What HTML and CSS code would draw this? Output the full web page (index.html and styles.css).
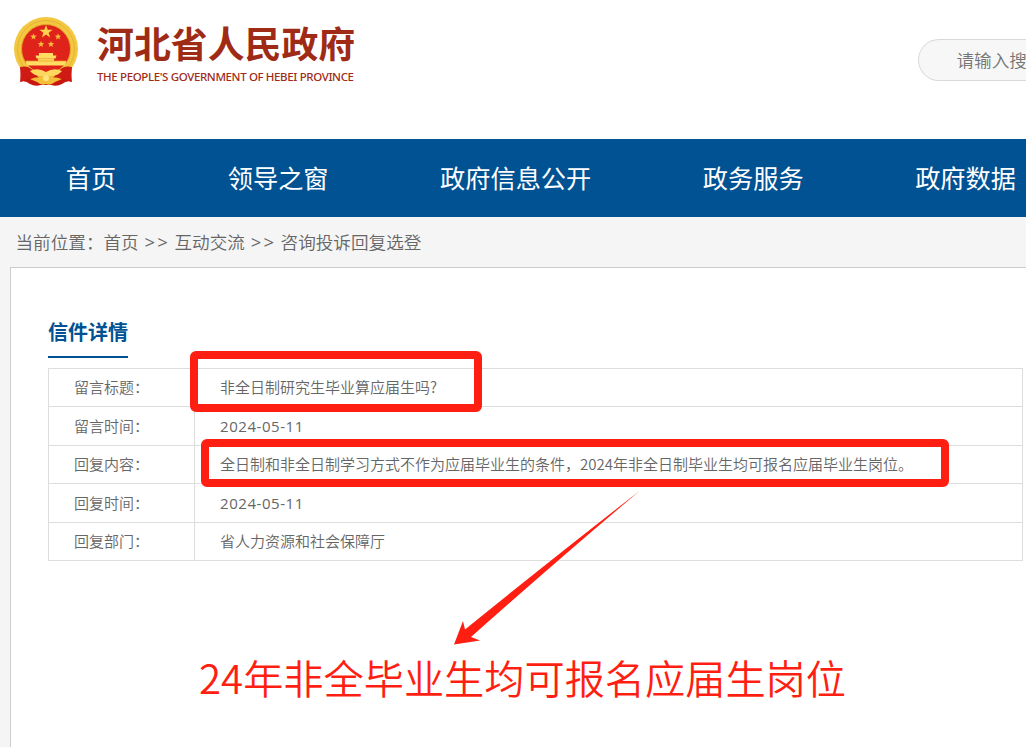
FILE: index.html
```html
<!DOCTYPE html>
<html lang="zh-CN">
<head>
    <meta charset="UTF-8">
    <meta name="viewport" content="width=device-width, initial-scale=1.0">
    <title>河北省人民政府</title>
    <link rel="stylesheet" href="styles.css">
</head>
<body>
    <header class="header">
        <div class="logo">
            <svg class="emblem" viewBox="0 0 66 70" width="66" height="70">
                <path d="M9 48 L7 65 Q12 63 17 67 Q22 70 28 68 L38 68 Q44 70 49 67 Q54 63 59 65 L57 48 Z" fill="#c9170f"/>
                <circle cx="33" cy="32" r="32" fill="#f3c740"/>
                <circle cx="33" cy="32" r="28.500" fill="none" stroke="#e6b432" stroke-width="1"/>
                <circle cx="33" cy="32" r="24.500" fill="#e0231a" stroke="#e0a428" stroke-width="1"/>
                <path d="M7 50 Q16 48 20 54 L26 61 Q16 60 8 65 Z M59 50 Q50 48 46 54 L40 61 Q50 60 58 65 Z" fill="#cf1b13"/>
                <path d="M33 8l1.700 4.700h4.900l-4 3 1.500 4.800-4.100-2.900-4.100 2.900 1.500-4.800-4-3h4.900z" fill="#ffd34a"/>
                <g fill="#f6b93a">
                    <path d="M20.500 16.500l.9 2.100 2.300.2-1.800 1.400.6 2.300-2-1.300-2 1.300.6-2.300-1.800-1.400 2.300-.2z"/>
                    <path d="M45 16.500l.9 2.100 2.300.2-1.800 1.400.6 2.300-2-1.300-2 1.300.6-2.300-1.800-1.400 2.300-.2z"/>
                    <path d="M28 24l.9 2.100 2.300.2-1.800 1.400.6 2.300-2-1.300-2 1.300.6-2.300-1.800-1.400 2.300-.2z"/>
                    <path d="M38 24l.9 2.100 2.300.2-1.800 1.400.6 2.300-2-1.300-2 1.300.6-2.300-1.800-1.400 2.300-.2z"/>
                </g>
                <path d="M26 36h14v2.500h3.500l-1 3H23.500l-1-3H26zM25 41h16v3H25zM12.500 44h41l-1.500 4.500H14z" fill="#ffdc62"/>
                <path d="M24 41.700h18M13 44h40" stroke="#ef9a2c" stroke-width=".7"/>
                <path d="M17 54Q25 50 33 55Q41 50 49 54Q43 61 33 58Q23 61 17 54Z" fill="#ffd75c"/>
                <path d="M17 62Q26 59 33 61Q40 59 49 62L42 65Q37 69 33 67Q29 69 24 65Z" fill="#f3bf38"/>
                <circle cx="33" cy="61" r="3" fill="#ffe480"/>
            </svg>
            <div class="logo-text">
                <div class="logo-cn">河北省人民政府</div>
                <div class="logo-en">THE PEOPLE'S GOVERNMENT OF HEBEI PROVINCE</div>
            </div>
        </div>
        <div class="search">请输入搜</div>
    </header>

    <nav class="nav">
        <a>首页</a>
        <a>领导之窗</a>
        <a>政府信息公开</a>
        <a>政务服务</a>
        <a>政府数据</a>
    </nav>

    <div class="breadcrumb">当前位置：<a>首页</a><i>&gt;&gt;</i><a>互动交流</a><i>&gt;&gt;</i><a>咨询投诉回复选登</a></div>

    <main class="panel">
        <h2 class="title">信件详情</h2>
        <table class="detail">
            <tr class="first">
                <th>留言标题：</th>
                <td>非全日制研究生毕业算应届生吗?</td>
            </tr>
            <tr>
                <th>留言时间：</th>
                <td class="date">2024-05-11</td>
            </tr>
            <tr>
                <th>回复内容：</th>
                <td>全日制和非全日制学习方式不作为应届毕业生的条件，2024年非全日制毕业生均可报名应届毕业生岗位。</td>
            </tr>
            <tr>
                <th>回复时间：</th>
                <td class="date">2024-05-11</td>
            </tr>
            <tr>
                <th>回复部门：</th>
                <td>省人力资源和社会保障厅</td>
            </tr>
        </table>
        <p class="note">24年非全毕业生均可报名应届生岗位</p>
    </main>

    <!-- highlight boxes and arrow over the table -->
    <div class="mark mark-title"></div>
    <div class="mark mark-reply"></div>
    <svg class="arrow" viewBox="0 0 190 160" width="190" height="160">
        <path d="M189.500 0 Q112 60 15 138.500 L13 130 L4 153.500 L30 149.500 L21 146 Q110 67 189.500 0Z" fill="#ff1f12"/>
    </svg>
</body>
</html>
```

FILE: styles.css
```css
* {
    box-sizing: border-box;
}
body {
    margin: 0;
    width: 1026px;
    height: 747px;
    overflow: hidden;
    position: relative;
    background: #f5f5f5;
    color: #666;
    font-family: "Noto Sans CJK SC", sans-serif;
    font-weight: 350;
}
.header {
    height: 139px;
    background: #fff;
    display: flex;
    justify-content: space-between;
    align-items: flex-start;
    overflow: hidden;
}
.logo {
    display: flex;
    padding: 17px 0 0 13px;
}
.logo-text {
    margin-left: 18px;
    color: #9f2b16;
    white-space: nowrap;
}
.logo-cn {
    height: 51px;
    line-height: 50px;
    font-size: 36.9px;
    font-weight: 700;
}
.logo-en {
    font-family: "Noto Sans", sans-serif;
    font-size: 11.5px;
    font-weight: 500;
    line-height: 18px;
    letter-spacing: -0.37px;
}
.search {
    width: 108px;
    height: 42px;
    margin-top: 39px;
    padding-left: 37.5px;
    border: 1px solid #d9d9d9;
    border-right: 0;
    border-radius: 21px 0 0 21px;
    background: #f7f7f7;
    color: #757575;
    font-size: 17.6px;
    line-height: 39px;
    white-space: nowrap;
}
.nav {
    display: flex;
    height: 78px;
    padding-left: 10px;
    background: #005293;
    overflow: hidden;
}
.nav a {
    flex: none;
    padding: 0 55.8px;
    color: #fff;
    font-size: 25.2px;
    font-weight: 400;
    line-height: 76px;
}
.breadcrumb {
    height: 50px;
    padding-left: 15.5px;
    font-size: 17.6px;
    line-height: 49px;
    white-space: nowrap;
}
.breadcrumb i {
    font-family: "Open Sans", sans-serif;
    font-size: 18.5px;
    font-style: normal;
    font-weight: 400;
    letter-spacing: 2.3px;
    line-height: 1;
    padding: 0 4.2px 0 5.8px;
}
.panel {
    margin-left: 10px;
    height: 480px;
    padding: 42px 2px 0 37px;
    background: #fff;
    border: 1px solid #ccc;
    border-right: 0;
    border-bottom: 0;
}
.title {
    width: 80px;
    height: 48px;
    margin: 0 0 10px;
    border-bottom: 2px solid #005293;
    color: #005293;
    font-size: 20px;
    line-height: 44px;
}
.detail {
    width: 975px;
    height: 193px;
    border-collapse: collapse;
    table-layout: fixed;
    font-size: 15px;
}
.detail th,
.detail td {
    border: 1px solid #ddd;
    padding: 0 0 0 25px;
    height: 38.4px;
    line-height: 22px;
    text-align: left;
    font-weight: 350;
    white-space: nowrap;
}
.detail .first th,
.detail .first td {
    padding-bottom: 2px;
}
.detail th {
    width: 146px;
}
.detail .date {
    font-family: "Open Sans", sans-serif;
    font-weight: 400;
    letter-spacing: 0.55px;
}
.note {
    margin: 86px 0 0 151px;
    color: #ff1f12;
    font-size: 40.2px;
    line-height: 60px;
    white-space: nowrap;
}
.mark {
    position: absolute;
    border: 8px solid #ff1f12;
    border-radius: 6px;
}
.mark-title {
    left: 190px;
    top: 351px;
    width: 292px;
    height: 61px;
}
.mark-reply {
    left: 201px;
    top: 439px;
    width: 748px;
    height: 48px;
}
.arrow {
    position: absolute;
    left: 450px;
    top: 491px;
}
```
